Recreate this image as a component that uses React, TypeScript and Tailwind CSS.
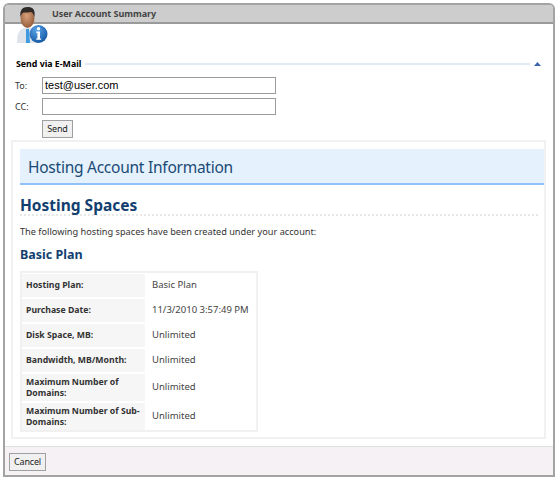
import React from "react";

const rows = [
  { label: "Hosting Plan:", value: "Basic Plan", h: "h-[23px]" },
  { label: "Purchase Date:", value: "11/3/2010 3:57:49 PM", h: "h-[23px]" },
  { label: "Disk Space, MB:", value: "Unlimited", h: "h-[23px]" },
  { label: "Bandwidth, MB/Month:", value: "Unlimited", h: "h-[23px]" },
  { label: "Maximum Number of Domains:", value: "Unlimited", h: "h-[27px]" },
  { label: "Maximum Number of Sub-Domains:", value: "Unlimited", h: "h-[27px]" },
];

function UserInfoIcon() {
  return (
    <svg width="32" height="38" viewBox="0 0 32 38" className="absolute left-[11px] top-[1px]">
      <defs>
        <radialGradient id="face" cx="0.45" cy="0.4" r="0.7">
          <stop offset="0" stopColor="#d9a27c" />
          <stop offset="1" stopColor="#8a5232" />
        </radialGradient>
        <radialGradient id="info" cx="0.4" cy="0.3" r="0.8">
          <stop offset="0" stopColor="#5aa4e8" />
          <stop offset="1" stopColor="#0c4f9c" />
        </radialGradient>
      </defs>
      <path d="M1 37c0-9 2-14 8-15h7c5 1 7 5 7 15z" fill="#dfe3ea" />
      <path d="M10 23h3l1 14h-4z" fill="#3f9be0" />
      <ellipse cx="11.5" cy="12" rx="7" ry="10" fill="url(#face)" />
      <path d="M4.500 11c-1-7 2-10 7-10s8 2 7 10c-1-3-2-5-4-5-3 1-7 0-8 1-1 1-1.500 2-2 4z" fill="#2f2a28" />
      <circle cx="22.500" cy="28" r="9" fill="url(#info)" />
      <circle cx="22.500" cy="22.800" r="1.700" fill="#ffffff" />
      <path d="M20.300 25.500h3.700v7h1.200v1.300h-5v-1.300h1.200v-5.500h-1.100z" fill="#ffffff" />
    </svg>
  );
}

export default function App() {
  return (
    <div className="w-[558px] h-[480px] bg-white p-[3px] font-['Noto_Sans',sans-serif]">
      <div className="relative w-[552px] h-[474px] flex flex-col border-2 border-[#a3a3a3] rounded-t-[6px] overflow-hidden">
        {/* Title bar */}
        <div className="h-[19px] shrink-0 bg-[#cdcdcd] border-b-2 border-[#9a9a9a] pl-[47px] flex items-center text-[9px] font-bold tracking-[-0.05px] text-[#444444]">
          User Account Summary
        </div>
        <UserInfoIcon />

        {/* Send form */}
        <div className="flex-1 min-h-0 flex flex-col pt-[32px] px-[6px]">
          <div className="flex items-center pl-[5px] pr-[6px] h-[16px] text-[8.800px] font-bold text-black">
            <span className="mr-[4px] pt-[2px]">Send via E-Mail</span>
            <div className="flex-1 h-[2px] bg-[#e3eaf6]" />
            <svg width="7" height="4" viewBox="0 0 7 4" className="ml-[4px]">
              <path d="M3.500 0 7 4H0z" fill="#3b66ab" />
            </svg>
          </div>
          <div className="flex items-center h-[17px] mt-[5px] pl-[4px] text-[9px] text-[#333333]">
            <span className="w-[27px]">To:</span>
            <div className="w-[234px] h-[17px] border border-[#9b9b9b] bg-white pl-[2px] flex items-center text-[11px] text-black font-['Liberation_Sans',sans-serif]">
              test@user.com
            </div>
          </div>
          <div className="flex items-center h-[17px] mt-[4px] pl-[4px] text-[9px] text-[#333333]">
            <span className="w-[27px]">CC:</span>
            <div className="w-[234px] h-[17px] border border-[#9b9b9b] bg-white" />
          </div>
          <div className="mt-[5px] ml-[31px] w-[31px] h-[18px] border border-[#a0a0a0] bg-[#f0f0f0] flex items-center justify-center text-[9px] tracking-[-0.2px] text-[#222222]">
            Send
          </div>

          {/* Content panel */}
          <div className="mt-[2px] w-[535px] h-[299px] border-2 border-[#f1f1f1] pt-[7px] pl-[7px]">
            <div className="h-[36px] bg-[#e5f1fd] border-b-2 border-[#92c0f8] pl-[8px] pt-[3px] flex items-center text-[15.500px] tracking-[-0.25px] text-[#1a4a75]">
              Hosting Account Information
            </div>
            <div className="mr-[6px] mt-[12px] h-[19px] border-b-2 border-dotted border-[#e8e8e8] text-[15.500px] leading-[17px] font-bold text-[#123f70]">
              Hosting Spaces
            </div>
            <p className="mt-[10px] text-[9.200px] leading-[12px] text-[#333333]">
              The following hosting spaces have been created under your account:
            </p>
            <h2 className="mt-[9px] text-[12.500px] leading-[16px] font-bold text-[#123f70]">Basic Plan</h2>
            <div className="mt-[8px] w-[238px] border-2 border-[#f1f1f1] flex flex-col gap-[2px] pt-[1px]">
              {rows.map((r) => (
                <div key={r.label} className={`flex ${r.h}`}>
                  <div className="w-[123px] shrink-0 bg-[#f6f6f6] pl-[4px] pr-[2px] flex items-center text-[8.700px] leading-[11px] font-bold text-[#333333]">
                    {r.label}
                  </div>
                  <div className="pl-[7px] flex items-center text-[9.500px] text-[#444444] whitespace-nowrap">{r.value}</div>
                </div>
              ))}
            </div>
          </div>

          <div className="flex-1" />
        </div>

        {/* Footer */}
        <div className="h-[29px] shrink-0 bg-[#f5f1f5] border-t border-[#e0e0e0] pl-[4px] pt-[6px]">
          <div className="w-[37px] h-[18px] border border-[#a0a0a0] bg-[#f0f0f0] flex items-center justify-center text-[9px] tracking-[-0.2px] text-[#222222]">
            Cancel
          </div>
        </div>
      </div>
    </div>
  );
}
